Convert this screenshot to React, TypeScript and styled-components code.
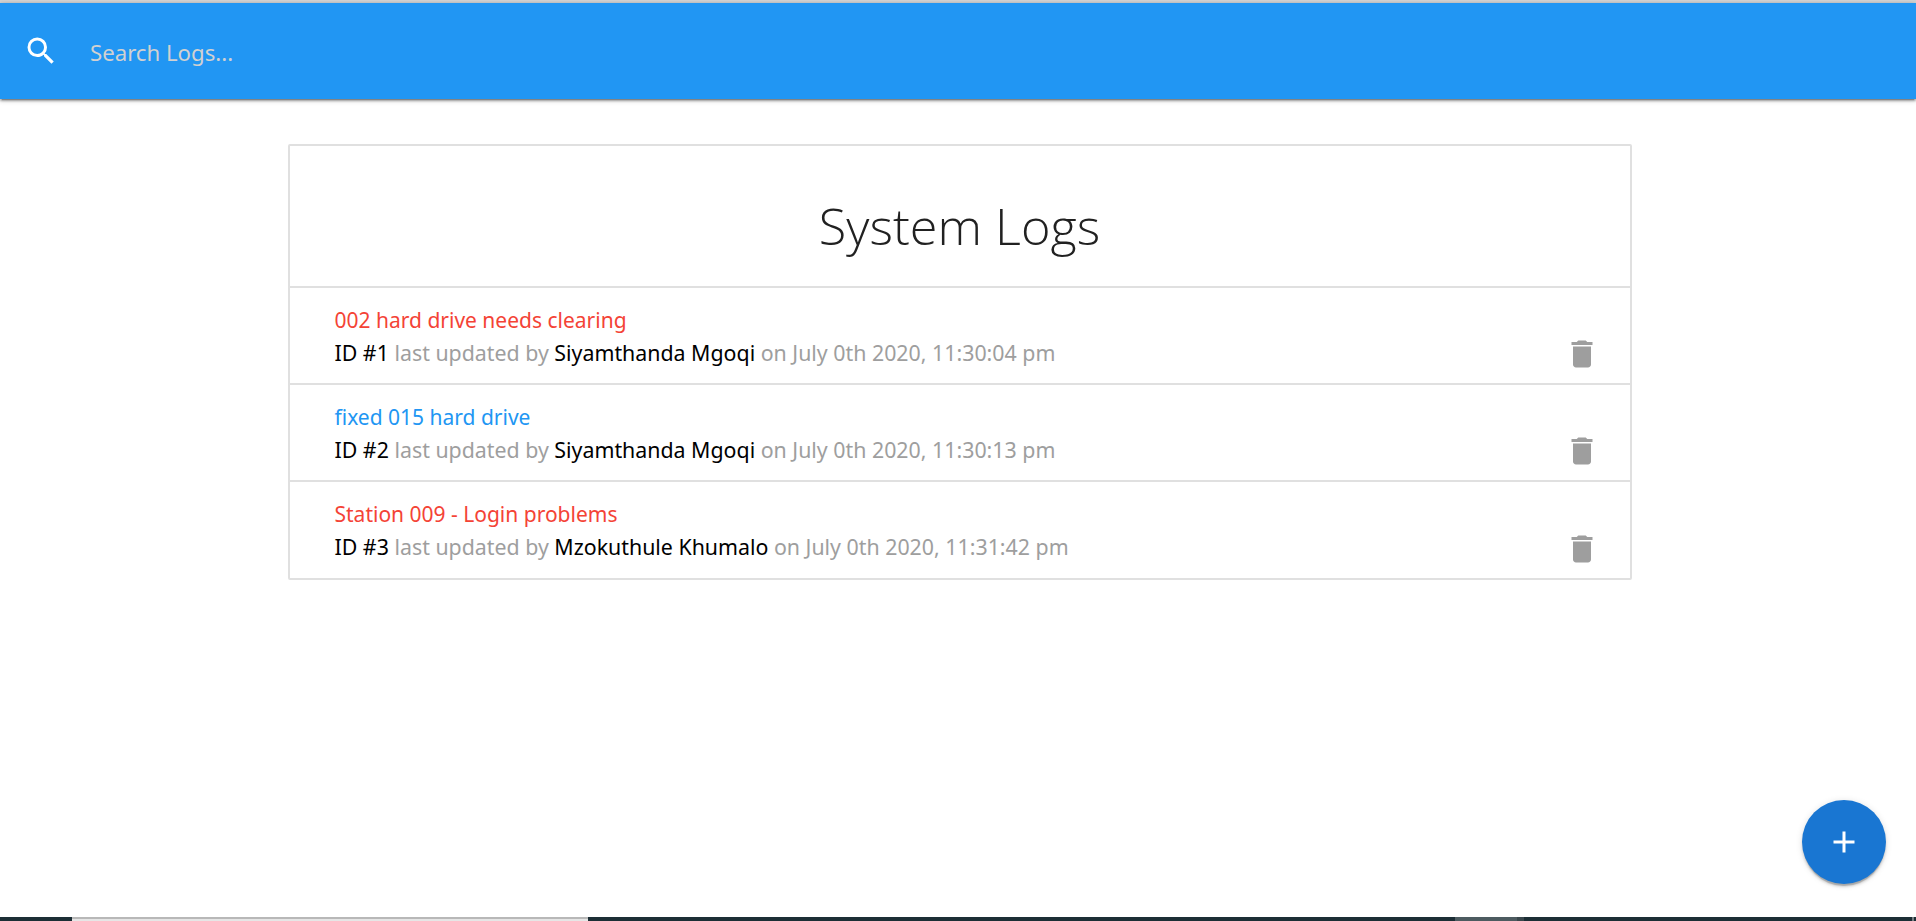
import React from 'react';
import styled, { createGlobalStyle } from 'styled-components';

interface ILog {
  id: number;
  message: string;
  attention: boolean;
  tech: string;
  date: string;
}

const logs: ILog[] = [
  { id: 1, message: '002 hard drive needs clearing', attention: true, tech: 'Siyamthanda Mgoqi', date: 'July 0th 2020, 11:30:04 pm' },
  { id: 2, message: 'fixed 015 hard drive', attention: false, tech: 'Siyamthanda Mgoqi', date: 'July 0th 2020, 11:30:13 pm' },
  { id: 3, message: 'Station 009 - Login problems', attention: true, tech: 'Mzokuthule Khumalo', date: 'July 0th 2020, 11:31:42 pm' },
];

const GlobalStyle = createGlobalStyle`
  html, body {
    margin: 0;
    padding: 0;
    height: 100%;
    background: #fff;
    overflow: hidden;
  }
  body {
    font-family: "Noto Sans", "Open Sans", sans-serif;
  }
`;

const Page = styled.div`
  display: flex;
  flex-direction: column;
  height: 921px;
  box-sizing: border-box;
  border-top: 3px solid #d4d4d4;
`;
const Nav = styled.nav`
  display: flex;
  align-items: center;
  height: 96px;
  flex-shrink: 0;
  background-color: #2196f3;
  box-shadow: 0 2px 2px 0 rgba(0, 0, 0, 0.24), 0 3px 1px -2px rgba(0, 0, 0, 0.2), 0 1px 5px 0 rgba(0, 0, 0, 0.3);
`;
const SearchIcon = styled.svg`
  width: 36px;
  height: 36px;
  margin-left: 23px;
  fill: #fff;
`;
const SearchInput = styled.input`
  flex: 1;
  margin-left: 31px;
  border: none;
  outline: none;
  background: transparent;
  font-family: inherit;
  font-size: 22.2px;
  color: #fff;
  padding: 3px 0 0;
  &::placeholder {
    color: #d1d1d1;
    opacity: 1;
  }
`;
const Main = styled.main`
  flex: 1;
  padding: 45px 0 0 3px;
`;
const Card = styled.ul`
  width: 1344px;
  margin: 0 auto;
  padding: 0;
  list-style: none;
  box-sizing: border-box;
  border: 2px solid #e0e0e0;
  border-radius: 2px;
`;
const CardHeader = styled.li`
  display: flex;
  align-items: center;
  justify-content: center;
  height: 142px;
  box-sizing: border-box;
  padding-top: 19px;
  border-bottom: 2px solid #e0e0e0;
`;
const Title = styled.h4`
  margin: 0;
  font-size: 50.4px;
  font-weight: 300;
  color: #212121;
  font-family: "Open Sans", "Noto Sans", sans-serif;
`;
const Row = styled.li`
  display: flex;
  align-items: flex-end;
  justify-content: space-between;
  height: 97px;
  box-sizing: border-box;
  padding: 0 30px 0 45px;
  border-bottom: 2px solid #e0e0e0;
  &:last-child {
    border-bottom: none;
    height: 96px;
  }
`;
const RowText = styled.div`
  display: flex;
  flex-direction: column;
  align-self: center;
  gap: 1px;
  padding-top: 1px;
  line-height: 32px;
`;
const Message = styled.a<{ $attention: boolean }>`
  font-size: 21px;
  color: ${(props) => (props.$attention ? '#f44336' : '#2196f3')};
`;
const Meta = styled.span`
  font-size: 21.35px;
  color: #9e9e9e;
`;
const Strong = styled.span`
  color: #000;
`;
const DeleteIcon = styled.svg`
  width: 36px;
  height: 36px;
  margin-bottom: 11px;
  fill: #9e9e9e;
`;
const Fab = styled.button`
  position: fixed;
  right: 30px;
  bottom: 37px;
  width: 84px;
  height: 84px;
  padding: 0;
  display: flex;
  align-items: center;
  justify-content: center;
  border: none;
  border-radius: 50%;
  background-color: #1976d2;
  box-shadow: 0 3px 3px 0 rgba(0, 0, 0, 0.14), 0 1px 7px 0 rgba(0, 0, 0, 0.12), 0 3px 1px -1px rgba(0, 0, 0, 0.2);
`;
const PlusIcon = styled.svg`
  width: 36px;
  height: 36px;
  fill: #fff;
`;
const Taskbar = styled.div`
  display: flex;
  height: 4px;
  flex-shrink: 0;
  background-color: #1c2e35;
`;
const TaskbarSegment = styled.div<{ $width: number; $color: string }>`
  width: ${(props) => props.$width}px;
  background-color: ${(props) => props.$color};
`;
const ActiveWindow = styled.div`
  width: 516px;
  box-sizing: border-box;
  background-color: #e6e6e6;
  border-top: 2px solid #b8b8b8;
`;

const App: React.FC = () => {
  return (
    <Page>
      <GlobalStyle />
      <Nav>
        <SearchIcon viewBox="0 0 24 24">
          <path d="M15.5 14h-.79l-.28-.27A6.47 6.47 0 0 0 16 9.5 6.5 6.5 0 1 0 9.5 16c1.61 0 3.09-.59 4.23-1.57l.27.28v.79l5 4.99L20.49 19l-4.99-5zm-6 0C7.01 14 5 11.99 5 9.5S7.01 5 9.5 5 14 7.01 14 9.5 11.99 14 9.5 14z" />
        </SearchIcon>
        <SearchInput placeholder="Search Logs..." />
      </Nav>
      <Main>
        <Card>
          <CardHeader>
            <Title>System Logs</Title>
          </CardHeader>
          {logs.map((log) => (
            <Row key={log.id}>
              <RowText>
                <Message $attention={log.attention}>{log.message}</Message>
                <Meta>
                  <Strong>ID #{log.id}</Strong> last updated by <Strong>{log.tech}</Strong> on {log.date}
                </Meta>
              </RowText>
              <DeleteIcon viewBox="0 0 24 24">
                <path d="M6 19c0 1.1.9 2 2 2h8c1.1 0 2-.9 2-2V7H6v12zM19 4h-3.5l-1-1h-5l-1 1H5v2h14V4z" />
              </DeleteIcon>
            </Row>
          ))}
        </Card>
      </Main>
      <Fab>
        <PlusIcon viewBox="0 0 24 24">
          <path d="M19 13h-6v6h-2v-6H5v-2h6V5h2v6h6v2z" />
        </PlusIcon>
      </Fab>
      <Taskbar>
        <TaskbarSegment $width={72} $color="#1c2e35" />
        <ActiveWindow />
        <TaskbarSegment $width={867} $color="#1c2e35" />
        <TaskbarSegment $width={62} $color="#4d5b60" />
        <TaskbarSegment $width={7} $color="#3a474c" />
        <TaskbarSegment $width={388} $color="#1c2e35" />
        <TaskbarSegment $width={2} $color="#777f83" />
      </Taskbar>
    </Page>
  );
};

export default App;
